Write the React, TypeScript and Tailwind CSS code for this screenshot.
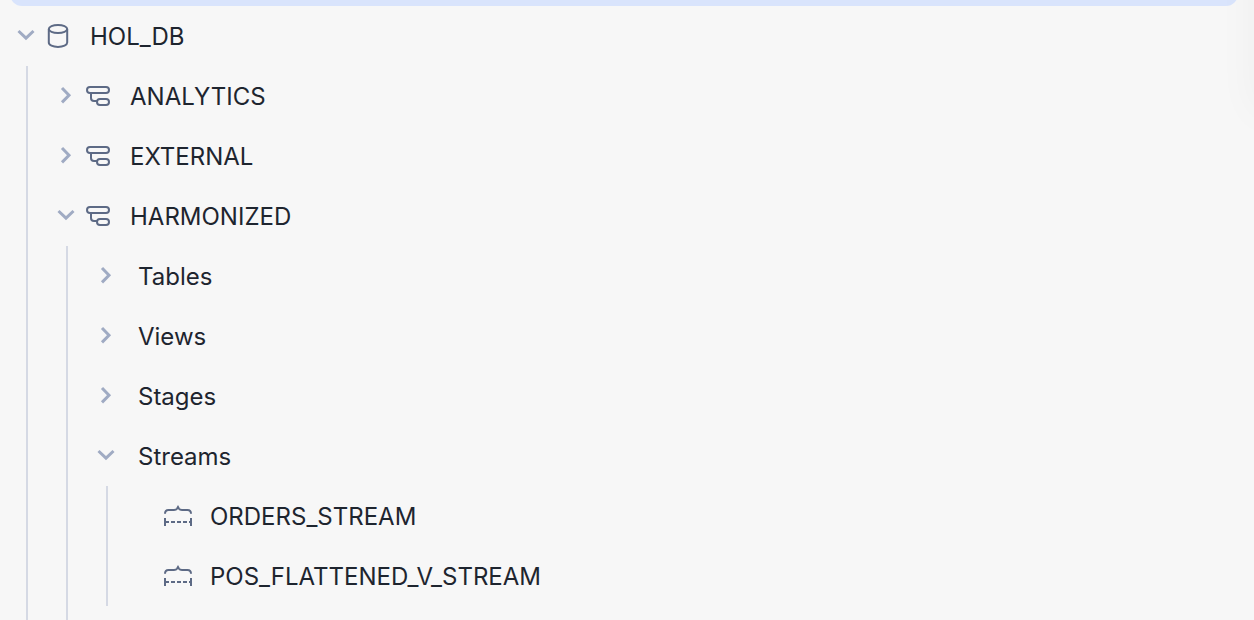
import { useState, type ReactNode } from "react";

type IconName = "database" | "schema" | "stream";

type TreeNode = {
  name: string;
  icon?: IconName;
  open?: boolean;
  leaf?: boolean;
  children?: TreeNode[];
};

const tree: TreeNode[] = [
  {
    name: "HOL_DB",
    icon: "database",
    open: true,
    children: [
      { name: "ANALYTICS", icon: "schema" },
      { name: "EXTERNAL", icon: "schema" },
      {
        name: "HARMONIZED",
        icon: "schema",
        open: true,
        children: [
          { name: "Tables" },
          { name: "Views" },
          { name: "Stages" },
          {
            name: "Streams",
            open: true,
            children: [
              { name: "ORDERS_STREAM", icon: "stream", leaf: true },
              { name: "POS_FLATTENED_V_STREAM", icon: "stream", leaf: true },
            ],
          },
        ],
      },
    ],
  },
];

const drawings: Record<IconName, ReactNode> = {
  database: (
    <>
      <ellipse cx="16" cy="9" rx="9.2" ry="4" />
      <path d="M6.8 9v13.5c0 2.6 4 4.4 9.2 4.4s9.2-1.8 9.2-4.4V9" />
    </>
  ),
  schema: (
    <>
      <rect x="5" y="7" width="22" height="6" rx="3" />
      <rect x="15" y="19" width="12" height="6" rx="3" />
      <path d="M9 13v5q0 3 3 3h3" />
    </>
  ),
  stream: (
    <>
      <path d="M3 13.800q0-3.800 3.500-3.800H12q2.200 0 3-1.200l1-1.800 1 1.800q.8 1.200 3 1.200h5.500q3.500 0 3.500 3.800" />
      <path d="M3 18v8M29 18v8" />
      <path d="M4 22h24" strokeDasharray="4 2" strokeDashoffset="1" />
    </>
  ),
};

function NodeIcon({ name }: { name: IconName }) {
  return (
    <svg
      aria-hidden="true"
      viewBox="0 0 32 32"
      fill="none"
      stroke="currentColor"
      strokeWidth="2"
      className="size-8 shrink-0 text-[#5d6a85]"
    >
      {drawings[name]}
    </svg>
  );
}

function Chevron({ open }: { open: boolean }) {
  return (
    <svg
      aria-hidden="true"
      viewBox="0 0 20 20"
      fill="none"
      stroke="currentColor"
      strokeWidth="3"
      className="size-5 shrink-0 text-[#a0abc3]"
    >
      <path d={open ? "M2.5 5l7.5 7.2L17.5 5" : "M6 2l7 7.2-7 7.2"} />
    </svg>
  );
}

const rowClass = "flex h-15 w-full shrink-0 items-center pl-4 text-left";

function Branch({ node }: { node: TreeNode }) {
  const [open, setOpen] = useState(node.open ?? false);
  const holdsLeaves = node.children?.every((child) => child.leaf);
  const content = (
    <>
      {node.icon && <NodeIcon name={node.icon} />}
      <span className="ml-4 pt-0.5">{node.name}</span>
    </>
  );

  return (
    <li className="flex flex-col last:grow">
      {node.leaf ? (
        <a href="#" className={rowClass}>
          <span className="mr-1.5 w-5 shrink-0" />
          {content}
        </a>
      ) : (
        <button
          type="button"
          aria-expanded={open}
          onClick={() => setOpen(!open)}
          className={rowClass}
        >
          <span className="mr-1.5">
            <Chevron open={open} />
          </span>
          {content}
        </button>
      )}
      {open && node.children && (
        <ul
          className={`ml-[26px] flex flex-col border-l-2 border-[#d5d9e4] pl-3 ${
            holdsLeaves ? "" : "grow"
          }`}
        >
          {node.children.map((child) => (
            <Branch key={child.name} node={child} />
          ))}
        </ul>
      )}
    </li>
  );
}

export default function App() {
  return (
    <div className="relative flex min-h-screen flex-col overflow-hidden bg-[#f7f7f7] font-['Inter',sans-serif] text-2xl font-normal text-[#1e252f]">
      <div className="flex h-1.5 items-end overflow-hidden pr-4 pl-2.5">
        <div className="h-15 grow rounded-xl bg-[#d9e4fc]" />
      </div>
      <nav aria-label="Databases" className="flex grow flex-col">
        <ul className="flex grow flex-col">
          {tree.map((node) => (
            <Branch key={node.name} node={node} />
          ))}
        </ul>
      </nav>
      <div className="pointer-events-none absolute -top-20 left-full h-48 w-40 shadow-[0_0_40px_rgba(0,0,0,0.04)]" />
    </div>
  );
}
